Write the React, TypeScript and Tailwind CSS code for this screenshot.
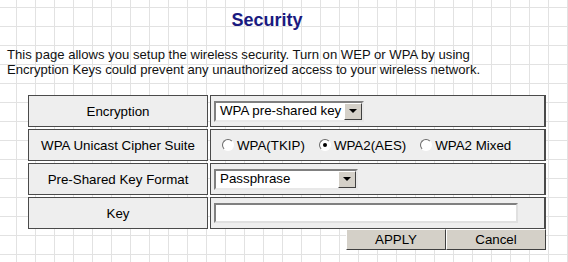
import React from 'react'

// classic windows-style widgets used in the old router config pages
function DropArrow() {
  return (
    <span className="flex h-full w-[18px] shrink-0 items-center justify-center bg-[#d4d0c8] border border-t-white border-l-white border-r-[#404040] border-b-[#404040]">
      <svg width="8" height="4" viewBox="0 0 8 4">
        <path d="M0 0h8L4 4z" fill="#000" />
      </svg>
    </span>
  )
}

function Select({ value, width }: { value: string; width: string }) {
  return (
    <div
      className={
        'flex h-[21px] items-stretch bg-white border-2 border-t-[#808080] border-l-[#808080] border-r-[#e8e8e8] border-b-[#e8e8e8] ' +
        width
      }
    >
      <span className="flex flex-1 items-center pl-[4px] text-[13.33px] leading-none text-black whitespace-nowrap">
        {value}
      </span>
      <DropArrow />
    </div>
  )
}

function Radio({ label, checked }: { label: string; checked?: boolean }) {
  return (
    <label className="mr-[14px] flex items-center">
      <span className="mr-[3px] flex h-[12px] w-[12px] items-center justify-center rounded-full bg-white border border-t-[#6a6a6a] border-l-[#6a6a6a] border-r-white border-b-white">
        {checked && <span className="h-[4px] w-[4px] rounded-full bg-black" />}
      </span>
      <span>{label}</span>
    </label>
  )
}

function Row({ label, children }: { label: string; children: React.ReactNode }) {
  return (
    <div className="flex gap-[2px]">
      <div className="flex h-[32px] w-[180px] items-center justify-center border border-[#4a4a4a] bg-[#eeeeee]">
        {label}
      </div>
      <div className="flex h-[32px] w-[336px] items-center border border-[#4a4a4a] border-r-2 bg-[#eeeeee] pl-[3px]">
        {children}
      </div>
    </div>
  )
}

export default function App() {
  return (
    <div className="h-[262px] w-[568px] overflow-hidden bg-white bg-[linear-gradient(to_right,#e2e2e2_1px,transparent_1px),linear-gradient(to_bottom,#e2e2e2_1px,transparent_1px)] [background-size:19px_19px] [background-position:-3px_-12px] font-['Liberation_Sans',Arial,sans-serif] text-[13.33px] leading-[15px] text-black">
      <h1 className="w-[534px] pt-[9px] text-center text-[18px] leading-[22px] font-bold text-[#1a1a80]">
        Security
      </h1>

      <p className="mt-[16px] pl-[7px] text-[13.1px] text-[#111]">
        This page allows you setup the wireless security. Turn on WEP or WPA by using
        <br />
        Encryption Keys could prevent any unauthorized access to your wireless network.
      </p>

      <div className="ml-[28px] mt-[18px] w-[518px]">
        <div className="flex flex-col gap-[2px]">
          <Row label="Encryption">
            <Select value="WPA pre-shared key" width="w-[150px]" />
          </Row>
          <Row label="WPA Unicast Cipher Suite">
            <div className="flex items-center pl-[8px]">
              <Radio label="WPA(TKIP)" />
              <Radio label="WPA2(AES)" checked />
              <Radio label="WPA2 Mixed" />
            </div>
          </Row>
          <Row label="Pre-Shared Key Format">
            <Select value="Passphrase" width="w-[144px]" />
          </Row>
          <Row label="Key">
            <div className="h-[20px] w-[304px] bg-white border-2 border-t-[#808080] border-l-[#808080] border-r-[#e0e0e0] border-b-[#e0e0e0]" />
          </Row>
        </div>

        <div className="flex justify-end">
          <button className="h-[21px] w-[100px] bg-[#d4d0c8] border border-t-white border-l-white border-r-[#404040] border-b-[#404040] text-[13.33px] leading-none text-black">
            APPLY
          </button>
          <button className="h-[21px] w-[100px] bg-[#d4d0c8] border border-t-white border-l-white border-r-[#404040] border-b-[#404040] text-[13.33px] leading-none text-black">
            Cancel
          </button>
        </div>
      </div>
    </div>
  )
}
